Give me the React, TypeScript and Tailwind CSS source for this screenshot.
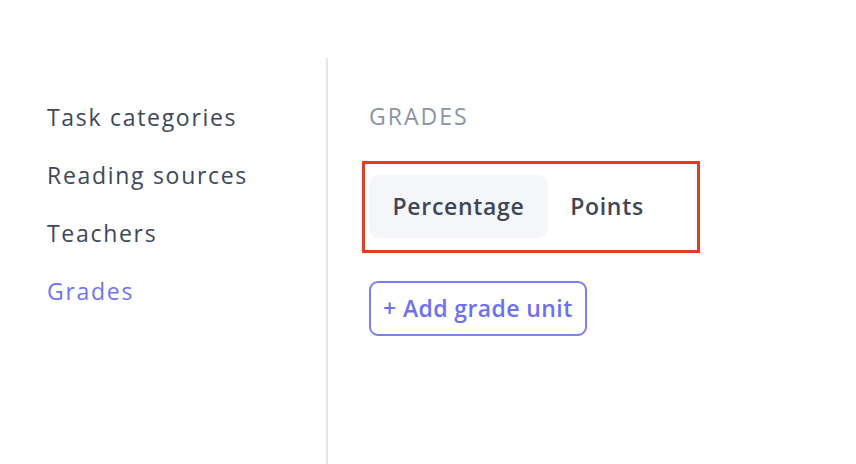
const navItems = ["Task categories", "Reading sources", "Teachers", "Grades"];

export default function App() {
  const active = "Grades";
  return (
    <div
      className="w-[856px] h-[464px] bg-white flex overflow-hidden"
      style={{ fontFamily: '"Open Sans", "Noto Sans", sans-serif' }}
    >
      <div className="w-[326px] pt-[100px] pl-[47px] flex flex-col">
        {navItems.map((item) => (
          <div
            key={item}
            className={`h-[58px] text-[23px] font-medium leading-[34px] tracking-[1.7px] ${
              item === active ? "text-[#7073f3]" : "text-[#3d4759]"
            }`}
          >
            {item}
          </div>
        ))}
      </div>
      <div className="mt-[58px] w-[2px] bg-[#e2e6ee]" />
      <div className="flex flex-col pl-[34px] pt-[101px]">
        <div className="pl-[7px] text-[23px] leading-[30px] text-[#8a94a4] tracking-[2px]">GRADES</div>
        <div className="mt-[30px] w-[338px] h-[92px] border-[3px] border-[#e63a25] p-[11px] pl-[4px] flex items-start">
          <button className="w-[179px] h-[63px] rounded-[10px] bg-[#f4f6fa] text-[23px] font-semibold tracking-[0.7px] text-[#3d4759]">
            Percentage
          </button>
          <button className="w-[118px] h-[63px] rounded-[10px] text-[23px] font-semibold tracking-[0.7px] text-[#3d4759]">
            Points
          </button>
        </div>
        <div className="mt-[28px] pl-[7px]">
          <button className="h-[55px] px-[12px] rounded-[9px] border-2 border-[#7b7ef4] text-[23px] font-semibold tracking-[0.4px] text-[#6d70f2]">
            + Add grade unit
          </button>
        </div>
      </div>
    </div>
  );
}
